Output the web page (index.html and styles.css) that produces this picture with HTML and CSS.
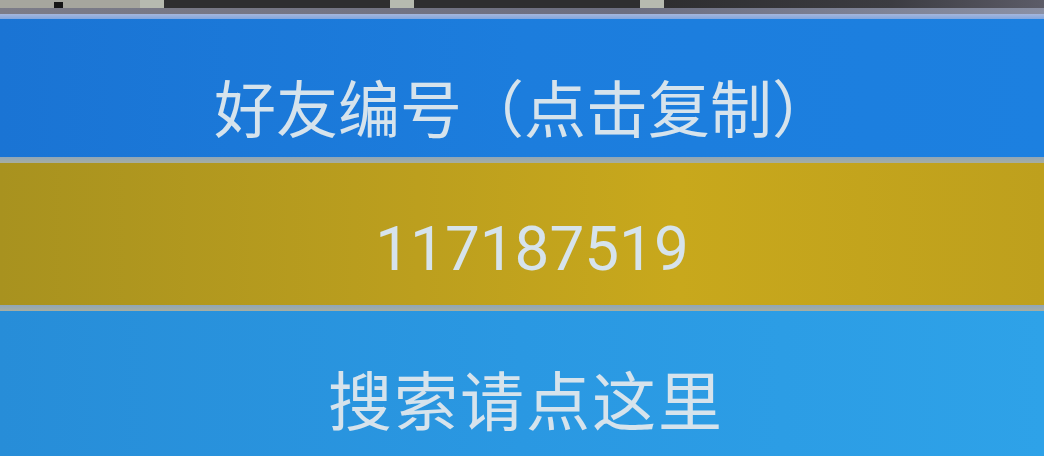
FILE: index.html
```html
<!DOCTYPE html>
<html lang="zh-CN">
<head>
<meta charset="utf-8">
<title>好友编号</title>
<link rel="stylesheet" href="styles.css">
</head>
<body>
<div class="screen">
  <div class="topbar">
    <div class="tb-left"><span class="dot"></span></div>
    <span class="tb-square"></span>
    <span class="tb-dark"></span>
    <span class="tb-square"></span>
    <span class="tb-dark"></span>
    <span class="tb-square"></span>
    <span class="tb-dark tb-last"></span>
  </div>
  <div class="topshade"></div>
  <div class="topline"></div>
  <div class="band band-title"><span class="label cjk">好友编号（点击复制）</span></div>
  <div class="sep"></div>
  <div class="band band-id"><span class="label num">117187519</span></div>
  <div class="sep"></div>
  <div class="band band-search"><span class="label cjk big">搜索请点这里</span></div>
</div>
</body>
</html>
```
FILE: styles.css
```css
html, body {
  margin: 0;
  padding: 0;
  background: #2a96df;
  overflow: hidden;
}
.screen {
  width: 1044px;
  height: 456px;
  display: flex;
  flex-direction: column;
  overflow: hidden;
}
.topbar {
  height: 8px;
  display: flex;
  flex: none;
}
.tb-left {
  width: 140px;
  flex: none;
  background: #a6a69e;
  position: relative;
}
.dot {
  position: absolute;
  left: 54px;
  top: 2px;
  width: 9px;
  height: 6px;
  background: #151515;
}
.tb-square {
  width: 24px;
  background: #b6bab0;
  flex: none;
}
.tb-dark {
  width: 226px;
  flex: none;
  background: #2e2e30;
}
.tb-last {
  flex: 1;
  background: linear-gradient(90deg, #2e2e30, #3c3c42 60%, #5c5c68);
}
.topshade {
  height: 6px;
  flex: none;
  background: linear-gradient(90deg, #7c7c88, #6c6e80 60%, #8a90a4);
}
.topline {
  height: 5px;
  flex: none;
  background: linear-gradient(180deg, #a4b6dc, #82a6de);
}
.band {
  display: flex;
  align-items: center;
  justify-content: center;
  flex: none;
  box-sizing: border-box;
}
.band-title {
  height: 138px;
  padding-top: 36px;
  padding-left: 4px;
  background: linear-gradient(90deg, #1a74d4 0%, #1c7ddd 50%, #1c80e0 100%);
}
.band-id {
  height: 142px;
  padding-top: 30px;
  padding-left: 20px;
  background: linear-gradient(90deg, #a8921f 0%, #bc9f1e 40%, #c8a81c 65%, #bea01d 100%);
}
.band-search {
  height: 145px;
  padding-top: 26px;
  padding-left: 8px;
  background: linear-gradient(90deg, #278dd8 0%, #2a98e2 50%, #2ea2e8 100%);
}
.sep {
  height: 6px;
  flex: none;
  background: linear-gradient(180deg, #8fa6b8, #a8aea0);
}
.label {
  color: #d6e3ec;
  line-height: 1;
  white-space: nowrap;
}
.cjk {
  font-family: "Noto Sans CJK SC", "Noto Sans", sans-serif;
  font-size: 62px;
  font-weight: 400;
}
.big {
  font-size: 64px;
  letter-spacing: 2px;
}
.num {
  font-family: Roboto, "Noto Sans", sans-serif;
  font-size: 62px;
}
```
